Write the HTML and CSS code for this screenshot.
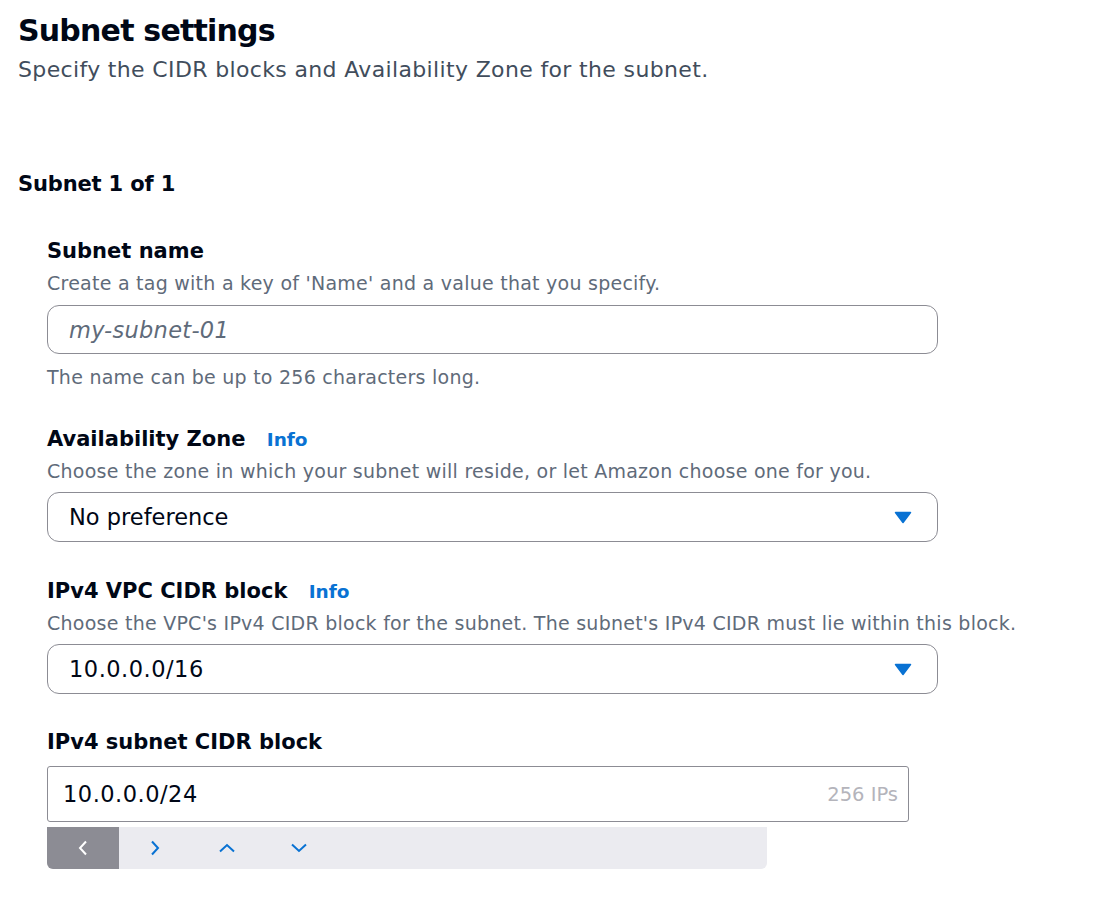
FILE: index.html
```html
<!DOCTYPE html>
<html lang="en">
<head>
<meta charset="utf-8">
<title>Subnet settings</title>
<link rel="stylesheet" href="styles.css">
</head>
<body>
<main class="page">
  <h1 class="title">Subnet settings</h1>
  <p class="subtitle">Specify the CIDR blocks and Availability Zone for the subnet.</p>

  <h2 class="subnet-heading">Subnet 1 of 1</h2>

  <div class="fields">
    <div class="field">
      <div class="label">Subnet name</div>
      <div class="desc">Create a tag with a key of 'Name' and a value that you specify.</div>
      <div class="input input-round input-first"><span class="placeholder">my-subnet-01</span></div>
      <div class="constraint">The name can be up to 256 characters long.</div>
    </div>

    <div class="field">
      <div class="label">Availability Zone <a class="info" href="#">Info</a></div>
      <div class="desc">Choose the zone in which your subnet will reside, or let Amazon choose one for you.</div>
      <div class="input input-round select">
        <span class="value">No preference</span>
        <svg class="caret" width="18" height="13" viewBox="0 0 18 13"><path d="M1.5 1.5h15L9 11.5z" fill="#0972d3" stroke="#0972d3" stroke-width="1.5" stroke-linejoin="round"/></svg>
      </div>
    </div>

    <div class="field">
      <div class="label">IPv4 VPC CIDR block <a class="info" href="#">Info</a></div>
      <div class="desc">Choose the VPC's IPv4 CIDR block for the subnet. The subnet's IPv4 CIDR must lie within this block.</div>
      <div class="input input-round select">
        <span class="value value-num">10.0.0.0/16</span>
        <svg class="caret" width="18" height="13" viewBox="0 0 18 13"><path d="M1.5 1.5h15L9 11.5z" fill="#0972d3" stroke="#0972d3" stroke-width="1.5" stroke-linejoin="round"/></svg>
      </div>
    </div>

    <div class="field field-last">
      <div class="label">IPv4 subnet CIDR block</div>
      <div class="cidr-input">
        <span class="value value-num">10.0.0.0/24</span>
        <span class="count">256 IPs</span>
      </div>
      <div class="toolbar">
        <button class="tool tool-disabled" type="button" aria-label="Previous">
          <svg width="14" height="18" viewBox="0 0 14 18"><path d="M10 2.5L4 9l6 6.5" fill="none" stroke="#fff" stroke-width="2"/></svg>
        </button>
        <button class="tool" type="button" aria-label="Next">
          <svg width="14" height="18" viewBox="0 0 14 18"><path d="M4 2.5l6 6.5-6 6.5" fill="none" stroke="#0972d3" stroke-width="2"/></svg>
        </button>
        <button class="tool" type="button" aria-label="Increase">
          <svg width="20" height="12" viewBox="0 0 20 12"><path d="M3 9.5l7-6.5 7 6.5" fill="none" stroke="#0972d3" stroke-width="2"/></svg>
        </button>
        <button class="tool" type="button" aria-label="Decrease">
          <svg width="20" height="12" viewBox="0 0 20 12"><path d="M3 2.5l7 6.5 7-6.5" fill="none" stroke="#0972d3" stroke-width="2"/></svg>
        </button>
      </div>
    </div>
  </div>
</main>
</body>
</html>
```

FILE: styles.css
```css
* { box-sizing: border-box; }

html, body {
  margin: 0;
  padding: 0;
  background: #ffffff;
}

body {
  font-family: "DejaVu Sans", "Open Sans", sans-serif;
  color: #000716;
}

.page {
  padding: 11px 18px 0 18px;
}

.title {
  margin: 0;
  font-size: 30px;
  line-height: 40px;
  font-weight: 700;
  letter-spacing: -0.8px;
}

.subtitle {
  margin: 4px 0 0;
  font-size: 22px;
  line-height: 30px;
  letter-spacing: 0.35px;
  color: #414d5c;
}

.subnet-heading {
  margin: 84px 0 0;
  font-size: 21px;
  line-height: 30px;
  font-weight: 700;
  letter-spacing: -0.15px;
}

.fields {
  margin: 38px 0 0 29px;
  display: flex;
  flex-direction: column;
  gap: 35px;
}

.field {
  display: flex;
  flex-direction: column;
}

.field-last {
  margin-top: -1px;
}

.label {
  font-size: 21px;
  line-height: 28px;
  font-weight: 700;
}

.info {
  margin-left: 14px;
  font-size: 18.5px;
  line-height: 1;
  color: #0972d3;
  text-decoration: none;
  font-weight: 700;
}

.desc {
  margin-top: 5px;
  font-size: 19px;
  line-height: 26px;
  letter-spacing: 0.25px;
  color: #5f6b7a;
}

.input {
  width: 891px;
  border: 1px solid #8c8c94;
  background: #fff;
  display: flex;
  align-items: center;
}

.input-round {
  margin-top: 8px;
  height: 50px;
  border-radius: 12px;
  padding: 0 21px;
}

.input-first {
  margin-top: 9px;
  height: 49px;
}

.placeholder {
  font-style: italic;
  font-size: 22.5px;
  letter-spacing: 0.3px;
  color: #5f6b7a;
}

.value {
  font-size: 22.5px;
  color: #000716;
}

.value-num {
  letter-spacing: 0.5px;
}

.select {
  justify-content: space-between;
}

.caret {
  margin-right: 4px;
}

.constraint {
  margin-top: 10px;
  font-size: 19px;
  line-height: 26px;
  letter-spacing: 0.25px;
  color: #5f6b7a;
}

.cidr-input {
  margin-top: 10px;
  width: 862px;
  height: 56px;
  border: 1px solid #8c8c94;
  border-radius: 3px;
  padding: 0 10px 0 15px;
  display: flex;
  align-items: center;
  justify-content: space-between;
}

.count {
  font-size: 19.5px;
  color: #b4b4bb;
}

.toolbar {
  margin-top: 5px;
  width: 720px;
  height: 42px;
  background: #ebebf0;
  border-radius: 0 0 6px 6px;
  display: flex;
  overflow: hidden;
}

.tool {
  width: 72px;
  height: 42px;
  border: 0;
  padding: 0;
  margin: 0;
  background: transparent;
  display: flex;
  align-items: center;
  justify-content: center;
}

.tool-disabled {
  background: #8c8c94;
}
```
